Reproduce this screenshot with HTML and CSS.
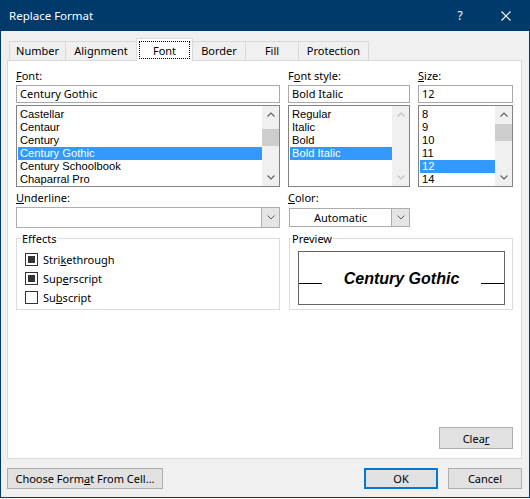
FILE: index.html
```html
<!DOCTYPE html>
<html>
<head>
<meta charset="utf-8">
<title>Replace Format</title>
<link rel="stylesheet" href="styles.css">
</head>
<body>
<div class="window">
  <div class="titlebar">
    <span class="title">Replace Format</span>
    <span class="cap-btn cap-help">?</span>
    <span class="cap-btn cap-close">
      <svg width="10" height="10" viewBox="0 0 10 10"><path d="M0.5 0.5L9.5 9.5M9.5 0.5L0.5 9.5" stroke="#fff" stroke-width="1.1" fill="none"/></svg>
    </span>
  </div>
  <div class="content">
    <div class="tabs">
      <div class="tab t-number">Number</div>
      <div class="tab t-align">Alignment</div>
      <div class="tab t-font active"><span class="focus">Font</span></div>
      <div class="tab t-border">Border</div>
      <div class="tab t-fill">Fill</div>
      <div class="tab t-prot">Protection</div>
    </div>
    <div class="panel">
      <div class="grid">
        <div class="lbl a-lf"><u>F</u>ont:</div>
        <div class="lbl a-ls">F<u>o</u>nt style:</div>
        <div class="lbl a-lz"><u>S</u>ize:</div>

        <div class="input a-if">Century Gothic</div>
        <div class="input a-is">Bold Italic</div>
        <div class="input a-iz">12</div>

        <div class="list a-xf">
          <div class="items">
            <div class="item">Castellar</div>
            <div class="item">Centaur</div>
            <div class="item">Century</div>
            <div class="item sel">Century Gothic</div>
            <div class="item">Century Schoolbook</div>
            <div class="item">Chaparral Pro</div>
          </div>
          <div class="sb">
            <div class="sb-arrow"><svg width="8" height="5" viewBox="0 0 8 5"><path d="M0.5 4.5L4 1L7.5 4.5" stroke="#606060" stroke-width="1.2" fill="none"/></svg></div>
            <div class="sb-track"><div class="thumb" style="margin-top:6px"></div></div>
            <div class="sb-arrow"><svg width="8" height="5" viewBox="0 0 8 5"><path d="M0.5 0.5L4 4L7.5 0.5" stroke="#606060" stroke-width="1.2" fill="none"/></svg></div>
          </div>
        </div>
        <div class="list a-xs">
          <div class="items">
            <div class="item">Regular</div>
            <div class="item">Italic</div>
            <div class="item">Bold</div>
            <div class="item sel">Bold Italic</div>
          </div>
          <div class="sb">
            <div class="sb-arrow"><svg width="8" height="5" viewBox="0 0 8 5"><path d="M0.5 4.5L4 1L7.5 4.5" stroke="#c2c2c2" stroke-width="1.2" fill="none"/></svg></div>
            <div class="sb-track"></div>
            <div class="sb-arrow"><svg width="8" height="5" viewBox="0 0 8 5"><path d="M0.5 0.5L4 4L7.5 0.5" stroke="#c2c2c2" stroke-width="1.2" fill="none"/></svg></div>
          </div>
        </div>
        <div class="list a-xz">
          <div class="items">
            <div class="item">8</div>
            <div class="item">9</div>
            <div class="item">10</div>
            <div class="item">11</div>
            <div class="item sel">12</div>
            <div class="item">14</div>
          </div>
          <div class="sb">
            <div class="sb-arrow"><svg width="8" height="5" viewBox="0 0 8 5"><path d="M0.5 4.5L4 1L7.5 4.5" stroke="#606060" stroke-width="1.2" fill="none"/></svg></div>
            <div class="sb-track"><div class="thumb" style="margin-top:1px"></div></div>
            <div class="sb-arrow"><svg width="8" height="5" viewBox="0 0 8 5"><path d="M0.5 0.5L4 4L7.5 0.5" stroke="#606060" stroke-width="1.2" fill="none"/></svg></div>
          </div>
        </div>

        <div class="lbl lbl-row4 a-lu"><u>U</u>nderline:</div>
        <div class="lbl lbl-row4 a-lc"><u>C</u>olor:</div>

        <div class="combo a-cu">
          <div class="combo-val"></div>
          <div class="combo-btn"><svg width="8" height="5" viewBox="0 0 8 5"><path d="M0.5 0.5L4 4L7.5 0.5" stroke="#606060" stroke-width="1" fill="none"/></svg></div>
        </div>
        <div class="combo combo-color a-cc">
          <div class="combo-val">Automatic</div>
          <div class="combo-btn"><svg width="8" height="5" viewBox="0 0 8 5"><path d="M0.5 0.5L4 4L7.5 0.5" stroke="#606060" stroke-width="1" fill="none"/></svg></div>
        </div>

        <fieldset class="group effects a-ef">
          <legend>Effects</legend>
          <div class="checks">
            <div class="check"><span class="box on"></span><span>Stri<u>k</u>ethrough</span></div>
            <div class="check"><span class="box on"></span><span>Sup<u>e</u>rscript</span></div>
            <div class="check"><span class="box"></span><span>Su<u>b</u>script</span></div>
          </div>
        </fieldset>
        <fieldset class="group preview a-pv">
          <legend>Preview</legend>
          <div class="pv-box">
            <div class="pv-line"></div>
            <div class="pv-text">Century Gothic</div>
            <div class="pv-line"></div>
          </div>
        </fieldset>
      </div>
      <div class="panel-foot">
        <div class="btn btn-clear">Clea<u>r</u></div>
      </div>
    </div>
    <div class="bottom">
      <div class="btn btn-choose">Choose Form<u>a</u>t From Cell...</div>
      <div class="btn btn-ok">OK</div>
      <div class="btn btn-cancel">Cancel</div>
    </div>
  </div>
</div>
</body>
</html>
```
FILE: styles.css
```css
body {
  margin: 0;
  background: #ffffff;
  font-family: "Noto Sans", "Open Sans", sans-serif;
  font-size: 11px;
  color: #000;
}

.window {
  width: 530px;
  height: 498px;
  box-sizing: border-box;
  border: 1px solid #003a6b;
  border-top: 0;
  background: #f0f0f0;
  display: flex;
  flex-direction: column;
}

.titlebar {
  height: 31px;
  flex: none;
  background: #003a6b;
  color: #fff;
  display: flex;
  align-items: center;
}
.title {
  padding-left: 8px;
  font-size: 11.5px;
}
.cap-btn {
  width: 46px;
  height: 31px;
  display: flex;
  align-items: center;
  justify-content: center;
}
.cap-help {
  margin-left: auto;
  font-size: 12px;
}

.content {
  flex: 1;
  padding: 7px 7px 0 6px;
  display: flex;
  flex-direction: column;
}

/* Tabs */
.tabs {
  display: flex;
  align-items: flex-end;
  height: 22px;
  margin-left: 2px;
}
.tab {
  height: 19px;
  box-sizing: border-box;
  border: 1px solid #d9d9d9;
  border-bottom: 0;
  margin-right: -1px;
  display: flex;
  align-items: center;
  justify-content: center;
  line-height: 15px;
  padding-bottom: 1px;
}
.t-number { width: 57px; }
.t-align { width: 72px; }
.t-font { width: 57px; }
.t-border { width: 54px; }
.t-fill { width: 54px; }
.t-prot { width: 71px; }
.tab.active {
  height: 23px;
  margin-bottom: -1px;
  background: #fff;
  position: relative;
  z-index: 1;
  align-items: flex-start;
  padding-bottom: 0;
}
.focus {
  margin-top: 2px;
  width: 51px;
  height: 18px;
  box-sizing: border-box;
  border: 1px dotted #000;
  display: flex;
  align-items: center;
  justify-content: center;
}

/* Panel */
.panel {
  height: 399px;
  box-sizing: border-box;
  border: 1px solid #d9d9d9;
  background: #fff;
  padding: 7px 8px 9px 8px;
  display: flex;
  flex-direction: column;
}
.grid {
  display: grid;
  grid-template-columns: 264px 122px 95px;
  column-gap: 8px;
  grid-template-areas:
    "lf ls lz"
    "if is iz"
    "xf xs xz"
    "lu lc ."
    "cu cc ."
    "ef pv pv";
  align-items: start;
}
.a-lf { grid-area: lf; }
.a-ls { grid-area: ls; }
.a-lz { grid-area: lz; }
.a-if { grid-area: if; }
.a-is { grid-area: is; }
.a-iz { grid-area: iz; }
.a-xf { grid-area: xf; }
.a-xs { grid-area: xs; }
.a-xz { grid-area: xz; }
.a-lu { grid-area: lu; }
.a-lc { grid-area: lc; }
.a-cu { grid-area: cu; }
.a-cc { grid-area: cc; }
.a-ef { grid-area: ef; }
.a-pv { grid-area: pv; }

.lbl {
  height: 15px;
  line-height: 15px;
  white-space: nowrap;
}
.lbl-row4 { margin-top: 3px; }

.input {
  margin-top: 2px;
  height: 18px;
  box-sizing: border-box;
  border: 1px solid #a9a9a9;
  padding: 0 3px;
  line-height: 16px;
  white-space: nowrap;
}

.list {
  margin-top: 2px;
  height: 82px;
  box-sizing: border-box;
  border: 1px solid #828282;
  display: flex;
}
.items {
  flex: 1;
  min-width: 0;
  padding: 2px 0 0 1px;
}
.item {
  height: 13px;
  line-height: 13px;
  padding-left: 2px;
  white-space: nowrap;
  font-family: "Liberation Sans", Arial, sans-serif;
  font-size: 11.2px;
}
.item.sel {
  background: #3399ff;
  color: #fff;
}
.sb {
  width: 17px;
  flex: none;
  background: #f0f0f0;
  display: flex;
  flex-direction: column;
}
.sb-arrow {
  height: 17px;
  flex: none;
  display: flex;
  align-items: center;
  justify-content: center;
}
.sb-track { flex: 1; }
.thumb {
  height: 17px;
  background: #cdcdcd;
}

.combo {
  margin-top: 2px;
  height: 21px;
  box-sizing: border-box;
  border: 1px solid #adadad;
  background: #fff;
  display: flex;
}
.combo-color {
  margin-top: 3px;
  margin-left: 1px;
  height: 19px;
}
.combo-val {
  flex: 1;
  text-align: center;
  line-height: 17px;
}
.combo-btn {
  width: 17px;
  flex: none;
  background: #e5e5e5;
  border-left: 1px solid #adadad;
  display: flex;
  align-items: center;
  justify-content: center;
}

/* Group boxes */
.group {
  margin: 3px 0 0;
  padding: 0;
  border: 1px solid #dcdcdc;
  min-width: 0;
  align-self: stretch;
}
.group legend {
  padding: 0 1px;
  line-height: 15px;
  margin-left: 4px;
}
.preview {
  margin-left: 1px;
}
.preview legend {
  margin-left: 1px;
}
.checks {
  padding: 4px 0 2px 8px;
}
.check {
  height: 19px;
  display: flex;
  align-items: center;
  gap: 5px;
}
.box {
  width: 13px;
  height: 13px;
  box-sizing: border-box;
  border: 1px solid #333;
  padding: 2px;
}
.box.on::after {
  content: "";
  display: block;
  width: 7px;
  height: 7px;
  background: #333;
}

.pv-box {
  margin: 5px 7px 4px 8px;
  height: 54px;
  box-sizing: border-box;
  border: 1px solid #646464;
  padding-top: 17px;
  display: flex;
  align-items: baseline;
}
.pv-line {
  width: 23px;
  height: 1px;
  flex: none;
  background: #000;
}
.pv-text {
  flex: 1;
  text-align: center;
  font-family: "Liberation Sans", Arial, sans-serif;
  font-weight: bold;
  font-style: italic;
  font-size: 16px;
  line-height: 19px;
}

/* Buttons */
.panel-foot {
  margin-top: auto;
  display: flex;
  justify-content: flex-end;
}
.btn {
  height: 22px;
  box-sizing: border-box;
  border: 1px solid #adadad;
  background: #e1e1e1;
  display: flex;
  align-items: center;
  justify-content: center;
  line-height: 15px;
  white-space: nowrap;
}
.btn-clear { width: 74px; }
.bottom {
  display: flex;
  margin-top: 9px;
}
.bottom .btn { height: 21px; }
.btn-choose { width: 156px; }
.btn-ok {
  width: 74px;
  margin-left: auto;
  border: 2px solid #0078d7;
}
.btn-cancel {
  width: 74px;
  margin-left: 10px;
}
```
